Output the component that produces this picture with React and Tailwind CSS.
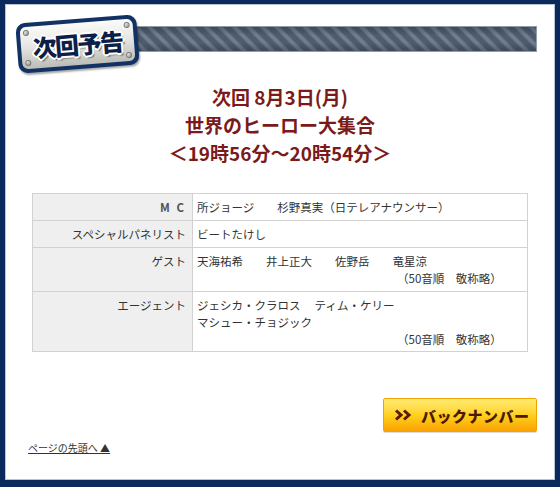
import React from 'react'

const font = { fontFamily: '"Noto Sans CJK JP", "Liberation Sans", sans-serif' }

const rows = [
  { label: 'M C', h: 'h-[27px]', lines: ['所ジョージ　　杉野真実（日テレアナウンサー）'], mc: true },
  { label: 'スペシャルパネリスト', h: 'h-[27px]', lines: ['ビートたけし'] },
  { label: 'ゲスト', h: 'h-[44px]', lines: ['天海祐希　　井上正大　　佐野岳　　竜星涼'], note: true },
  { label: 'エージェント', h: 'h-[60px]', lines: ['ジェシカ・クラロス　 ティム・ケリー', 'マシュー・チョジック'], note: true },
]

function Screw({ className }) {
  return (
    <span className={`absolute w-[6px] h-[6px] rounded-full bg-gradient-to-br from-white to-[#8c8c8c] border border-[#7a7a7a] ${className}`} />
  )
}

function Badge() {
  return (
    <div className="absolute left-[11px] top-[14px] w-[121px] h-[50px] rotate-[-4.5deg] rounded-[9px] bg-[#123266] p-[4px] shadow-[1px_2px_2px_rgba(0,0,0,0.35)]">
      <div className="relative w-full h-full rounded-[6px] bg-gradient-to-b from-[#fbfbf9] via-[#e4e4e0] to-[#bdbdb8] flex items-center justify-center">
        <Screw className="left-[3px] top-[3px]" />
        <Screw className="right-[3px] top-[3px]" />
        <Screw className="left-[3px] bottom-[3px]" />
        <Screw className="right-[3px] bottom-[3px]" />
        <span
          className="text-[24px] leading-none font-black text-[#0d1f47] tracking-[-1.5px] [text-shadow:2px_0_0_#fff,-2px_0_0_#fff,0_2px_0_#fff,0_-2px_0_#fff,1px_1px_0_#fff,-1px_-1px_0_#fff,1px_-1px_0_#fff,-1px_1px_0_#fff,2px_3px_1px_rgba(0,0,0,0.35)]"
        >
          次回予告
        </span>
      </div>
    </div>
  )
}

export default function App() {
  return (
    <div className="w-[560px] h-[487px] bg-[#0b2a5c] pt-[4px] px-[5px] pb-[7px]" style={font}>
      <div className="h-full bg-white border border-[#b7c3d3] flex flex-col">
        {/* header */}
        <div className="relative h-[70px] shrink-0">
          <div className="ml-[100px] mr-[17px] mt-[21px] h-[26px] border border-[#8f9cac] bg-[linear-gradient(to_bottom,rgba(20,30,45,0.3),rgba(0,0,0,0)_35%,rgba(0,0,0,0)_65%,rgba(20,30,45,0.3)),repeating-linear-gradient(45deg,#4d5c6e_0px,#4d5c6e_4px,#717e8e_6px,#717e8e_8px,#4d5c6e_10px)]" />
          <Badge />
        </div>

        {/* title */}
        <div className="mt-[8px] text-center text-[19px] leading-[28px] font-bold text-[#7b1a1a]">
          <p>次回 8月3日(月)</p>
          <p>世界のヒーロー大集合</p>
          <p>＜19時56分～20時54分＞</p>
        </div>

        {/* table */}
        <table className="mt-[26px] ml-[26px] w-[496px] border-collapse text-[11.5px] leading-[17px] text-[#333]">
          <tbody>
            {rows.map((r, i) => (
              <tr key={i} className={r.h}>
                <td className="w-[160px] align-top bg-[#efefef] border border-[#d2d2d2] text-right pr-[6px] pt-[5px]">
                  {r.mc ? <span className="tracking-[2px] font-bold text-[#555]">{r.label}</span> : r.label}
                </td>
                <td className="align-top border border-[#d2d2d2] pl-[4px] pt-[5px]">
                  {r.lines.map((l, j) => (
                    <div key={j}>{l}</div>
                  ))}
                  {r.note && <div className="pl-[200px]">（50音順　敬称略）</div>}
                </td>
              </tr>
            ))}
          </tbody>
        </table>

        {/* back number button */}
        <a
          href="#"
          className="self-end mr-[17px] mt-[46px] w-[154px] h-[34px] rounded-[2px] border border-[#f0a500] bg-gradient-to-b from-[#ffeb6e] via-[#ffd21c] to-[#f9a100] flex items-center pl-[11px] gap-[8px] shadow-[0_1px_1px_rgba(0,0,0,0.15)]"
        >
          <svg width="18" height="12" viewBox="0 0 18 12">
            <path d="M1 1.5 L6 6 L1 10.5" fill="none" stroke="#5a1a00" strokeWidth="3" strokeLinejoin="miter" />
            <path d="M9 1.5 L14 6 L9 10.5" fill="none" stroke="#5a1a00" strokeWidth="3" strokeLinejoin="miter" />
          </svg>
          <span className="text-[15px] font-black text-[#4e1800] tracking-[0.5px] leading-none">バックナンバー</span>
        </a>

        {/* page top link */}
        <a href="#" className="ml-[22px] mt-[9px] self-start text-[10px] leading-[14px] text-[#333] underline">
          ページの先頭へ ▲
        </a>
      </div>
    </div>
  )
}
